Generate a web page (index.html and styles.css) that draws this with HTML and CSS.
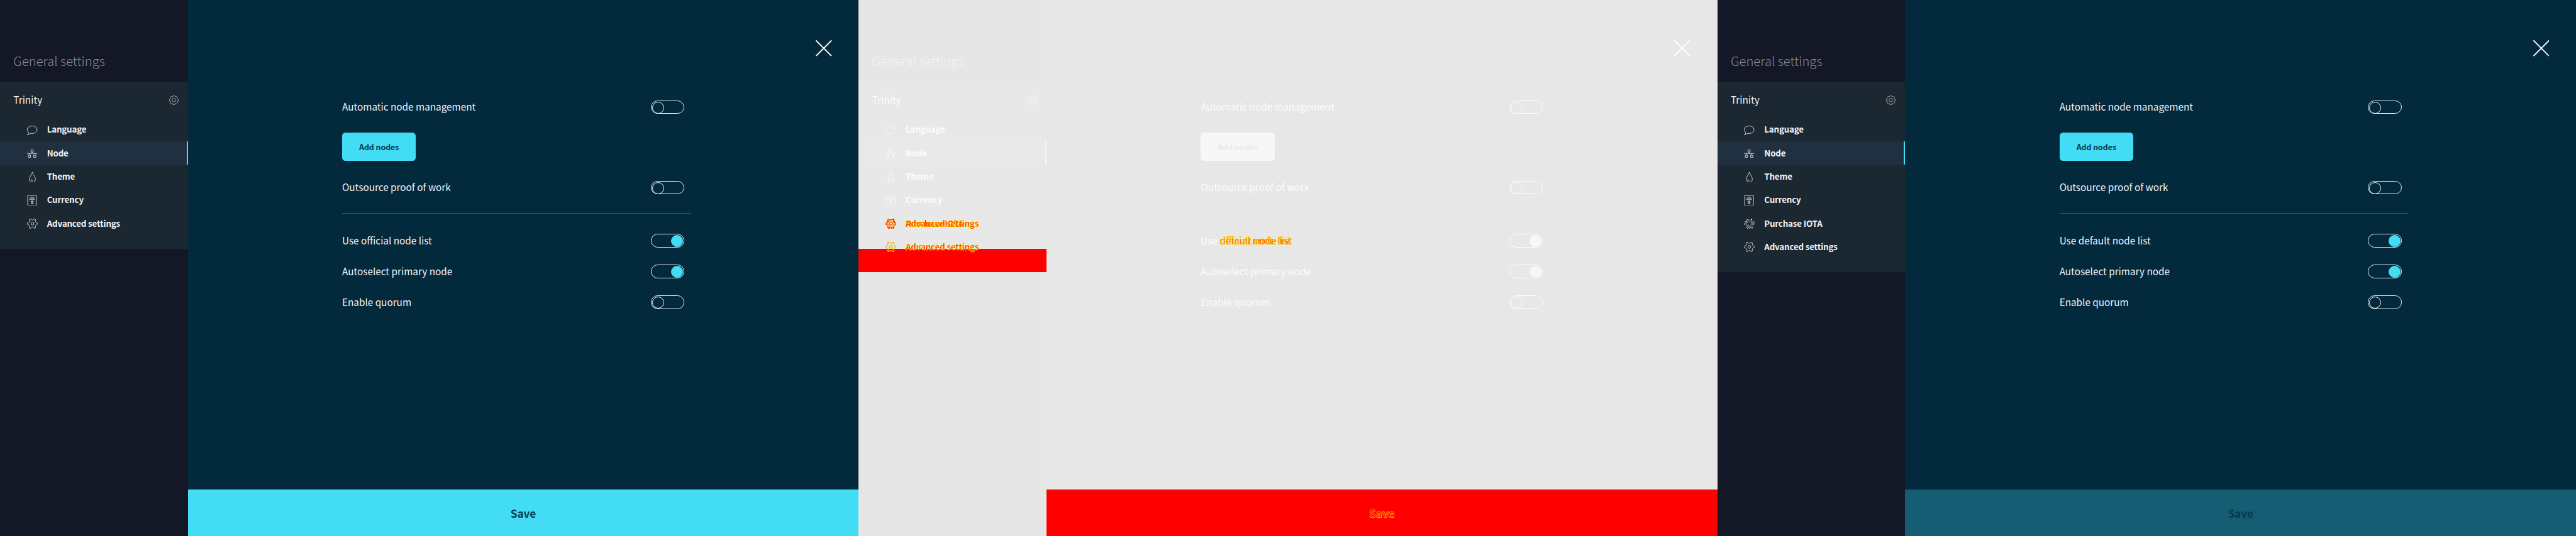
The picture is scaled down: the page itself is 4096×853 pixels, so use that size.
FILE: index.html
```html
<!DOCTYPE html>
<html lang="en">
<head>
<meta charset="utf-8">
<title>Node settings comparison</title>
<link rel="stylesheet" href="styles.css">
</head>
<body>
<svg class="sprite" aria-hidden="true">
  <symbol id="i-language" viewBox="0 0 96 96"><path d="M18 74C7 66 2 58 2 47C2 28 21 14 46 14S90 28 90 47S71 81 46 81C42 81 38 81 35 80C26 86 14 92 2 92C10 87 17 81 18 74Z"/></symbol>
  <symbol id="i-node" viewBox="0 0 96 96"><path d="M35.500 19.500h20v20h-20zM11.500 67.500h20v19h-20zM59.500 67.500h20v19h-20zM45.500 39.500V52M21.500 52v15.500M69.500 52v15.500M0 52h91"/></symbol>
  <symbol id="i-theme" viewBox="0 0 96 96"><path d="M48 5C44 26 21 45 21 69C21 86 33 96 48 96S75 86 75 69C75 45 52 26 48 5ZM35 66C35 76 41 82 50 82"/></symbol>
  <symbol id="i-currency" viewBox="0 0 96 96"><path d="M6 7Q10 3 14 7T24 7T34 7T45 7T55 7T65 7T75 7Q80 3 85 7V96Q80 92 75 95T65 95T55 95T45 95T34 95T24 95T14 95Q10 93 6 96ZM30 23h32M20 34h51M20 44h51M56 59H37V68H55V77H35M46 52v7M46 77v7"/></symbol>
  <symbol id="i-advanced" viewBox="0 0 96 96"><g transform="translate(48 50)"><path d="M38-8L47-4V4L38 8Q24 13.600 25.900 28.900L27 39L20 43L12.100 36.900Q0 27.600-12.100 36.900L-20 43L-27 39L-25.900 28.900Q-24 13.600-38 8L-47 4V-4L-38-8Q-24-13.600-25.900-28.900L-27-39L-20-43L-12.100-36.900Q0-27.600 12.100-36.900L20-43L27-39L25.900-28.900Q24-13.600 38-8Z"/><circle r="13"/></g></symbol>
  <symbol id="i-iota" viewBox="0 0 96 96">
    <g id="arm" class="dots"><circle cx="6" cy="54" r="6"/><circle cx="13" cy="34" r="4.500"/><circle cx="18" cy="45" r="4.500"/><circle cx="22" cy="18" r="4.500"/><circle cx="26" cy="29" r="4.200"/><circle cx="30" cy="40" r="3.800"/><circle cx="33" cy="15" r="3.800"/><circle cx="37" cy="27" r="3.500"/><circle cx="40" cy="38" r="3"/><circle cx="42" cy="15" r="3"/><circle cx="46" cy="26" r="3"/><circle cx="48" cy="38" r="2.500"/><circle cx="50" cy="17" r="2.600"/><circle cx="53" cy="28" r="2.400"/><circle cx="57" cy="21" r="2"/><circle cx="58" cy="31" r="2"/></g>
    <use href="#arm" transform="rotate(120 49 51)"/><use href="#arm" transform="rotate(240 49 51)"/>
  </symbol>
  <symbol id="i-cog" viewBox="-14 -14 28 28"><path d="M10.500-3.200L13.500-2.500V2.500L10.500 3.200L9.700 5.200L11.300 7.800L7.800 11.300L5.200 9.700L3.200 10.500L2.500 13.500H-2.500L-3.200 10.500L-5.200 9.700L-7.800 11.300L-11.300 7.800L-9.700 5.200L-10.500 3.200L-13.500 2.500V-2.500L-10.500-3.200L-9.700-5.200L-11.300-7.800L-7.800-11.300L-5.200-9.700L-3.200-10.500L-2.500-13.500H2.500L3.200-10.500L5.200-9.700L7.800-11.300L11.300-7.800L9.700-5.200Z"/><circle r="5.300"/></symbol>
  <symbol id="i-close" viewBox="0 0 48 48"><path d="M1.500 1.500L46.500 46.500M46.500 1.500L1.500 46.500"/></symbol>
</svg>
<div class="board">

  <section class="screen">
    <aside class="sidebar">
      <h1 class="title">General settings</h1>
      <nav class="group">
        <div class="group-head"><span class="text">Trinity</span><svg class="cog"><use href="#i-cog"/></svg></div>
        <ul class="menu">
          <li class="item"><svg class="icon"><use href="#i-language"/></svg><span class="text">Language</span></li>
          <li class="item active"><svg class="icon"><use href="#i-node"/></svg><span class="text">Node</span></li>
          <li class="item"><svg class="icon"><use href="#i-theme"/></svg><span class="text">Theme</span></li>
          <li class="item"><svg class="icon"><use href="#i-currency"/></svg><span class="text">Currency</span></li>
          <li class="item"><svg class="icon"><use href="#i-advanced"/></svg><span class="text">Advanced settings</span></li>
        </ul>
      </nav>
    </aside>
    <main class="main">
      <header class="top"><svg class="close"><use href="#i-close"/></svg></header>
      <div class="form">
        <div class="row"><span class="text">Automatic node management</span><span class="toggle"></span></div>
        <button class="add">Add nodes</button>
        <div class="row"><span class="text">Outsource proof of work</span><span class="toggle"></span></div>
        <hr class="rule">
        <div class="options">
          <div class="row"><span class="text">Use official node list</span><span class="toggle on"></span></div>
          <div class="row"><span class="text">Autoselect primary node</span><span class="toggle on"></span></div>
          <div class="row"><span class="text">Enable quorum</span><span class="toggle"></span></div>
        </div>
      </div>
      <button class="save">Save</button>
    </main>
  </section>

  <section class="screen diff">
    <aside class="sidebar">
      <h1 class="title">General settings</h1>
      <nav class="group">
        <div class="group-head"><span class="text">Trinity</span><svg class="cog"><use href="#i-cog"/></svg></div>
        <ul class="menu">
          <li class="item"><svg class="icon"><use href="#i-language"/></svg><span class="text">Language</span></li>
          <li class="item active"><svg class="icon"><use href="#i-node"/></svg><span class="text">Node</span></li>
          <li class="item"><svg class="icon"><use href="#i-theme"/></svg><span class="text">Theme</span></li>
          <li class="item"><svg class="icon"><use href="#i-currency"/></svg><span class="text">Currency</span></li>
          <li class="item changed"><svg class="icon"><use class="halo" href="#i-advanced"/><use class="halo" href="#i-iota"/><use href="#i-advanced"/><use href="#i-iota"/></svg><span class="stack"><span class="text">Purchase IOTA</span><span class="text">Advanced settings</span></span></li>
          <li class="item changed"><svg class="icon"><use class="halo" href="#i-advanced"/><use class="core" href="#i-advanced"/></svg><span class="text">Advanced settings</span></li>
        </ul>
      </nav>
    </aside>
    <main class="main">
      <header class="top"><svg class="close"><use href="#i-close"/></svg></header>
      <div class="form">
        <div class="row"><span class="text">Automatic node management</span><span class="toggle"></span></div>
        <button class="add">Add nodes</button>
        <div class="row"><span class="text">Outsource proof of work</span><span class="toggle"></span></div>
        <hr class="rule">
        <div class="options">
          <div class="row"><span class="words"><span class="text">Use</span><span class="stack changed"><span class="text">official node list</span><span class="text">default node list</span></span></span><span class="toggle on"></span></div>
          <div class="row"><span class="text">Autoselect primary node</span><span class="toggle on"></span></div>
          <div class="row"><span class="text">Enable quorum</span><span class="toggle"></span></div>
        </div>
      </div>
      <button class="save changed">Save</button>
    </main>
  </section>

  <section class="screen">
    <aside class="sidebar">
      <h1 class="title">General settings</h1>
      <nav class="group">
        <div class="group-head"><span class="text">Trinity</span><svg class="cog"><use href="#i-cog"/></svg></div>
        <ul class="menu">
          <li class="item"><svg class="icon"><use href="#i-language"/></svg><span class="text">Language</span></li>
          <li class="item active"><svg class="icon"><use href="#i-node"/></svg><span class="text">Node</span></li>
          <li class="item"><svg class="icon"><use href="#i-theme"/></svg><span class="text">Theme</span></li>
          <li class="item"><svg class="icon"><use href="#i-currency"/></svg><span class="text">Currency</span></li>
          <li class="item"><svg class="icon"><use href="#i-iota"/></svg><span class="text">Purchase IOTA</span></li>
          <li class="item"><svg class="icon"><use href="#i-advanced"/></svg><span class="text">Advanced settings</span></li>
        </ul>
      </nav>
    </aside>
    <main class="main">
      <header class="top"><svg class="close"><use href="#i-close"/></svg></header>
      <div class="form">
        <div class="row"><span class="text">Automatic node management</span><span class="toggle"></span></div>
        <button class="add">Add nodes</button>
        <div class="row"><span class="text">Outsource proof of work</span><span class="toggle"></span></div>
        <hr class="rule">
        <div class="options">
          <div class="row"><span class="text">Use default node list</span><span class="toggle on"></span></div>
          <div class="row"><span class="text">Autoselect primary node</span><span class="toggle on"></span></div>
          <div class="row"><span class="text">Enable quorum</span><span class="toggle"></span></div>
        </div>
      </div>
      <button class="save disabled">Save</button>
    </main>
  </section>

</div>
</body>
</html>
```
FILE: styles.css
```css
/* 1rem is 100 units of the 7680 x 1600 layout */
html { font-size: calc(100vw / 76.8); }
* { box-sizing: border-box; }
body {
  margin: 0;
  height: 100vh;
  overflow: hidden;
  font-family: "Noto Sans CJK SC", "Open Sans", sans-serif;
}
.sprite { display: block; width: 0; height: 0; position: absolute; }
.board { display: grid; grid-template-columns: repeat(3, 25.6rem); height: 16rem; }

.screen {
  --side: #141725;
  --group: #1b2731;
  --active: #213040;
  --main: #03293d;
  --text: #f0f1f5;
  --title: #898b92;
  --accent: #42dcf4;
  --on-accent: #033c4d;
  --rule: #405669;
  display: grid;
  grid-template-columns: 5.6rem 20rem;
  color: var(--text);
}
.diff {
  --side: #e6e6e6;
  --group: #e8e8e8;
  --active: #e9e9e9;
  --main: #e7e7e7;
  --text: #fdfdfd;
  --title: #f3f3f3;
  --accent: #f7f7f7;
  --on-accent: #e9e9e9;
  --rule: #ebebeb;
}

.sidebar { background: var(--side); }
.title {
  margin: 0;
  height: 2.44rem;
  padding: 1.51rem 0 0 .4rem;
  font-size: .378rem;
  line-height: .6rem;
  font-weight: 200;
  color: var(--title);
  white-space: nowrap;
}
.group { background: var(--group); padding-bottom: .4rem; }
.diff .group { background: linear-gradient(to top, #f00 .7rem, var(--group) .7rem); }
.group-head {
  display: flex;
  align-items: center;
  justify-content: space-between;
  height: 1.08rem;
  padding: .03rem .28rem 0 .4rem;
  font-size: .287rem;
}
.text { display: block; padding-bottom: .04rem; line-height: 1.2; white-space: nowrap; }
.cog { width: .28rem; height: .28rem; overflow: visible; fill: none; stroke: var(--text); stroke-width: 1.1; }
.menu { list-style: none; margin: 0; padding: 0; }
.item {
  display: flex;
  align-items: center;
  gap: .28rem;
  height: .7rem;
  padding-left: .8rem;
  font-size: .251rem;
  font-weight: 700;
  letter-spacing: -.0035rem;
}
.active { background: var(--active); border-right: .04rem solid var(--accent); }
.icon {
  width: .32rem;
  height: .32rem;
  overflow: visible;
  fill: none;
  stroke: var(--text);
  stroke-width: 4.6;
  stroke-linejoin: round;
}
.dots { fill: var(--text); stroke: none; }

.main { display: flex; flex-direction: column; background: var(--main); }
.top { display: flex; justify-content: flex-end; height: 3rem; padding: 1.2rem .8rem 0 0; }
.close { width: .48rem; height: .48rem; fill: none; stroke: var(--text); stroke-width: 3.6; stroke-linecap: round; }
.form { width: 10.4rem; margin-left: 4.6rem; }
.row {
  display: flex;
  align-items: center;
  justify-content: space-between;
  height: .4rem;
  padding-right: .2rem;
  font-size: .287rem;
}
.toggle { display: flex; width: 1rem; height: .4rem; padding: .02rem; border: .02rem solid var(--text); border-radius: .2rem; }
.toggle::before { content: ""; width: .32rem; height: .32rem; border: .02rem solid var(--text); border-radius: 50%; }
.toggle.on { justify-content: flex-end; }
.toggle.on::before { background: var(--accent); border-color: var(--accent); }
button { border: 0; padding: 0; font-family: inherit; font-weight: 700; letter-spacing: -.001rem; color: var(--on-accent); background: var(--accent); }
.add { display: block; width: 2.2rem; height: .84rem; margin: .56rem 0 .6rem; border-radius: .1rem; font-size: .233rem; }
.rule { height: .02rem; margin: .56rem 0 .6rem; border: 0; background: var(--rule); }
.options { display: grid; gap: .52rem; }
.save { height: 1.4rem; margin-top: auto; font-size: .323rem; }
.disabled { background: #145d73; color: #023b50; }

/* changed pixels: red bodies with yellow edges */
.words { display: flex; gap: .066rem; }
.stack { display: grid; }
.stack > .text { grid-area: 1 / 1; }
.changed { --text: #f00; color: #f00; -webkit-text-stroke: .01rem #ff0; }
.changed .halo { --text: #ff0; stroke: #ff0; stroke-width: 8; }
.changed .core { stroke: #f00; stroke-width: 2.5; }
.save.changed { background: #f00; }
```
